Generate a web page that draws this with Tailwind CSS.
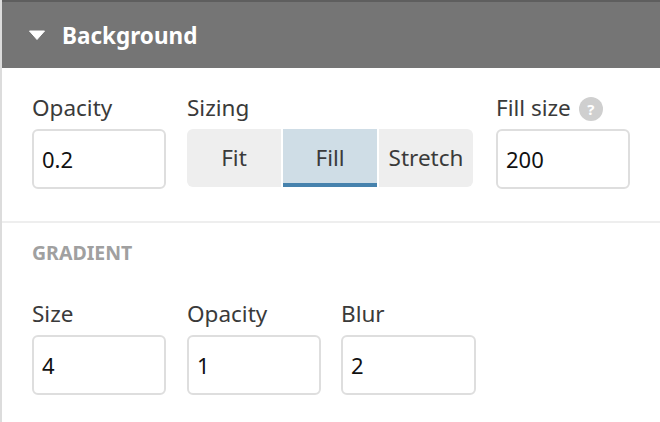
<!DOCTYPE html>
<html>
<head>
<meta charset="utf-8">
<script src="https://cdn.jsdelivr.net/npm/@tailwindcss/browser@4"></script>
</head>
<body class="bg-white">
<div class="w-[660px] h-[422px] overflow-hidden flex flex-col border-l-2 border-[#dcdcdc] font-['Noto_Sans','Open_Sans',sans-serif] text-[#3a3a3a]">
  <header class="h-[68px] shrink-0 border-t-2 border-[#5e5e5e] bg-[#757575] flex items-center pl-[26px] gap-[16px] text-white">
    <svg width="18" height="10" viewBox="0 0 18 10" class="shrink-0"><path d="M1.5 1 L16.5 1 L9 9.5 Z" fill="#fff" stroke="#fff" stroke-width="1" stroke-linejoin="round"/></svg>
    <span class="text-[22.5px] font-bold leading-none pt-[2px]">Background</span>
  </header>
  <section class="h-[155px] shrink-0 border-b-2 border-[#eeeeee] px-[30px] pt-[26px] flex">
    <div class="w-[134px]">
      <div class="h-[35px] text-[22.5px] leading-[28px]">Opacity</div>
      <div class="h-[60px] border-[2px] border-[#dedede] rounded-[6px] flex items-center pl-[8px] pt-[1px] text-[22px] text-[#111]">0.2</div>
    </div>
    <div class="w-[286px] ml-[21px]">
      <div class="h-[35px] text-[22.5px] leading-[28px]">Sizing</div>
      <div class="h-[58px] flex gap-[2px] text-[22.5px]">
        <div class="w-[94px] bg-[#eeeeee] rounded-l-[6px] flex items-center justify-center">Fit</div>
        <div class="w-[94px] bg-[#cfdde6] border-b-[4px] border-[#4682ad] flex items-center justify-center pt-[4px]">Fill</div>
        <div class="w-[94px] bg-[#eeeeee] rounded-r-[6px] flex items-center justify-center whitespace-nowrap">Stretch</div>
      </div>
    </div>
    <div class="w-[134px] ml-[23px]">
      <div class="h-[35px] text-[22.5px] leading-[28px] flex items-start gap-[8px] whitespace-nowrap">Fill size
        <span class="mt-[3px] w-[24px] h-[24px] rounded-full bg-[#cfcfcf] text-white text-[15px] font-bold flex items-center justify-center">?</span>
      </div>
      <div class="h-[60px] border-[2px] border-[#dedede] rounded-[6px] flex items-center pl-[8px] pt-[1px] text-[22px] text-[#111]">200</div>
    </div>
  </section>
  <section class="px-[30px] pt-[17px]">
    <div class="h-[25px] text-[19.5px] leading-[25px] font-bold text-[#a0a0a0]">GRADIENT</div>
    <div class="mt-[35px] flex">
      <div class="w-[134px]">
        <div class="h-[35px] text-[22.5px] leading-[28px]">Size</div>
        <div class="h-[60px] border-[2px] border-[#dedede] rounded-[6px] flex items-center pl-[8px] pt-[1px] text-[22px] text-[#111]">4</div>
      </div>
      <div class="w-[134px] ml-[21px]">
        <div class="h-[35px] text-[22.5px] leading-[28px]">Opacity</div>
        <div class="h-[60px] border-[2px] border-[#dedede] rounded-[6px] flex items-center pl-[8px] pt-[1px] text-[22px] text-[#111]">1</div>
      </div>
      <div class="w-[135px] ml-[20px]">
        <div class="h-[35px] text-[22.5px] leading-[28px]">Blur</div>
        <div class="h-[60px] border-[2px] border-[#dedede] rounded-[6px] flex items-center pl-[8px] pt-[1px] text-[22px] text-[#111]">2</div>
      </div>
    </div>
  </section>
</div>
</body>
</html>
